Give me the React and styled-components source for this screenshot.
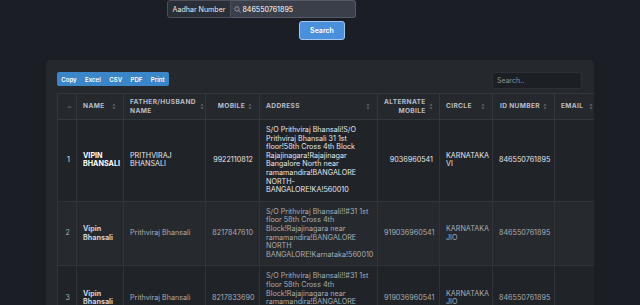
import React from 'react';
import styled, { createGlobalStyle } from 'styled-components';

const GlobalStyle = createGlobalStyle`
  html, body { margin: 0; padding: 0; background: #1b1e25; overflow: hidden; }
  body { font-family: Inter, "Noto Sans", sans-serif; }
  * { box-sizing: border-box; }
`;

const Page = styled.div`
  width: 640px;
  height: 305px;
  overflow: hidden;
  display: flex;
  flex-direction: column;
`;

const SearchForm = styled.form`
  display: flex;
  flex-direction: column;
  align-items: flex-start;
  margin: 0;
`;

const InputGroup = styled.div`
  display: flex;
  margin-left: 167px;
  width: 189px;
  height: 18px;
`;

const GroupLabel = styled.span`
  display: flex;
  align-items: center;
  padding: 0 4.5px;
  background: #2a2e36;
  border: 1px solid #4a4f59;
  border-radius: 3px 0 0 3px;
  color: #e8eaee;
  font-size: 7.1px;
  white-space: nowrap;
`;

const GroupField = styled.div`
  flex: 1;
  min-width: 0;
  display: flex;
  align-items: center;
  gap: 1.5px;
  padding: 0 3px;
  background: #3a3f49;
  border: 1px solid #555b66;
  border-left: none;
  border-radius: 0 3px 3px 0;
`;

const FieldInput = styled.input`
  flex: 1;
  width: 0;
  min-width: 0;
  border: none;
  outline: none;
  background: transparent;
  color: #ffffff;
  font-family: inherit;
  font-size: 7.1px;
  padding: 0;
`;

const SearchButton = styled.button`
  margin: 3px 0 0 299px;
  width: 46px;
  height: 19px;
  background: #4a8fdb;
  border: 1px solid #a3c6ef;
  border-radius: 3px;
  color: #ffffff;
  font-family: inherit;
  font-size: 7px;
  font-weight: 600;
  padding: 0;
`;

const Card = styled.section`
  flex: 1;
  margin: 20px 46px 0;
  background: #25282d;
  border-radius: 5px 5px 0 0;
  padding: 12px 0 0 11px;
  overflow: hidden;
`;

const Toolbar = styled.div`
  display: flex;
  justify-content: space-between;
  align-items: flex-start;
  padding-right: 12px;
  height: 17px;
`;

const ButtonGroup = styled.div`
  display: flex;
  height: 14px;
  background: #3b86c9;
  border-radius: 2px;
`;

const ExportButton = styled.button`
  background: transparent;
  border: none;
  padding: 0 4.2px;
  color: #ffffff;
  font-family: inherit;
  font-size: 6.1px;
  font-weight: 600;
`;

const FilterInput = styled.input`
  width: 90px;
  height: 17px;
  background: #1c1f24;
  border: 1px solid #2d3137;
  border-radius: 3px;
  color: #d0d3d8;
  font-family: inherit;
  font-size: 7px;
  padding: 0 4px;
  outline: none;
  &::placeholder { color: #8b9098; }
`;

const TableWrap = styled.div`
  margin-top: 4px;
  overflow: hidden;
`;

const Table = styled.table`
  border-collapse: collapse;
  table-layout: fixed;
  width: 543px;
`;

const Th = styled.th`
  height: 26px;
  padding: 0 7px 0 6px;
  background: #25282d;
  border: 1px solid #33373e;
  color: #b9bdc5;
  font-size: 6.6px;
  font-weight: 700;
  letter-spacing: 0.35px;
  text-transform: uppercase;
  line-height: 8.3px;
  vertical-align: middle;
`;

const HeadInner = styled.div`
  display: flex;
  align-items: center;
  gap: ${p => (p.$right ? '3px' : '4px')};
`;

const HeadText = styled.span`
  flex: 1;
  text-align: ${p => (p.$right ? 'right' : 'left')};
`;

const Tr = styled.tr`
  background: ${p => (p.$odd ? '#202328' : '#26292e')};
`;

const Td = styled.td`
  padding: 6px 6px;
  border: 1px solid #30343a;
  font-size: 7.2px;
  line-height: 8.6px;
  vertical-align: middle;
  text-align: ${p => (p.$right ? 'right' : 'left')};
  font-weight: ${p => (p.$bold ? 700 : 400)};
  color: ${p => p.$color};
  white-space: ${p => (p.$pre ? 'pre-line' : 'normal')};
`;

const SortIcon = () => (
  <svg width="4" height="7" viewBox="0 0 4 7" style={{ flex: 'none' }}>
    <path d="M2 0.5 L3.6 2.7 L0.4 2.7 Z" fill="#5d626b" />
    <path d="M2 6.5 L3.6 4.3 L0.4 4.3 Z" fill="#5d626b" />
  </svg>
);

const AscIcon = () => (
  <svg width="5" height="4" viewBox="0 0 5 4" style={{ flex: 'none' }}>
    <path d="M0.6 3.2 L2.5 1.2 L4.4 3.2" fill="none" stroke="#6f747d" strokeWidth="0.9" />
  </svg>
);

const MagnifierIcon = () => (
  <svg width="7" height="7" viewBox="0 0 10 10" style={{ flex: 'none' }}>
    <circle cx="4.2" cy="4.2" r="3.1" fill="none" stroke="#9aa0aa" strokeWidth="1.2" />
    <path d="M6.5 6.5 L9.2 9.2" stroke="#9aa0aa" strokeWidth="1.3" strokeLinecap="round" />
  </svg>
);

const columns = [
  { key: 'idx', label: '', width: 19, right: true },
  { key: 'name', label: 'Name', width: 47 },
  { key: 'father', label: 'Father/Husband Name', width: 82 },
  { key: 'mobile', label: 'Mobile', width: 54, right: true },
  { key: 'address', label: 'Address', width: 118 },
  { key: 'alt', label: 'Alternate Mobile', width: 62, right: true },
  { key: 'circle', label: 'Circle', width: 53 },
  { key: 'id', label: 'ID Number', width: 62, right: true },
  { key: 'email', label: 'Email', width: 46 },
];

const rows = [
  {
    idx: '1',
    name: 'VIPIN BHANSALI',
    father: 'PRITHVIRAJ BHANSALI',
    mobile: '9922110812',
    address:
      'S/O Prithviraj Bhansali!S/O\nPrithviraj Bhansali 31 1st\nfloor!58th Cross 4th Block\nRajajinagara!Rajajinagar\nBangalore North near\nramamandira!BANGALORE\nNORTH-\nBANGALORE!KA!560010',
    alt: '9036960541',
    circle: 'KARNATAKA VI',
    id: '846550761895',
    email: '',
    bright: true,
  },
  {
    idx: '2',
    name: 'Vipin Bhansali',
    father: 'Prithviraj Bhansali',
    mobile: '8217847610',
    address:
      'S/O Prithviraj Bhansali!!#31 1st\nfloor 58th Cross 4th\nBlock!Rajajinagara near\nramamandira!BANGALORE\nNORTH\nBANGALORE!Karnataka!560010',
    alt: '919036960541',
    circle: 'KARNATAKA JIO',
    id: '846550761895',
    email: '',
  },
  {
    idx: '3',
    name: 'Vipin Bhansali',
    father: 'Prithviraj Bhansali',
    mobile: '8217833690',
    address:
      'S/O Prithviraj Bhansali!!#31 1st\nfloor 58th Cross 4th\nBlock!Rajajinagara near\nramamandira!BANGALORE\nNORTH\nBANGALORE!Karnataka!560010',
    alt: '919036960541',
    circle: 'KARNATAKA JIO',
    id: '846550761895',
    email: '',
  },
];

function cellColor(row, key) {
  if (row.bright) return key === 'name' ? '#ffffff' : '#e4e6ea';
  if (key === 'name') return '#cfd2d7';
  return '#a9adb4';
}

export default function App() {
  return (
    <Page>
      <GlobalStyle />
      <SearchForm onSubmit={e => e.preventDefault()}>
        <InputGroup>
          <GroupLabel>Aadhar Number</GroupLabel>
          <GroupField>
            <MagnifierIcon />
            <FieldInput defaultValue="846550761895" />
          </GroupField>
        </InputGroup>
        <SearchButton type="submit">Search</SearchButton>
      </SearchForm>
      <Card>
        <Toolbar>
          <ButtonGroup>
            {['Copy', 'Excel', 'CSV', 'PDF', 'Print'].map(b => (
              <ExportButton key={b}>{b}</ExportButton>
            ))}
          </ButtonGroup>
          <FilterInput placeholder="Search.." />
        </Toolbar>
        <TableWrap>
          <Table>
            <colgroup>
              {columns.map(c => (
                <col key={c.key} style={{ width: c.width }} />
              ))}
            </colgroup>
            <thead>
              <tr>
                {columns.map(c => (
                  <Th key={c.key}>
                    <HeadInner $right={c.right}>
                      <HeadText $right={c.right}>{c.label}</HeadText>
                      {c.key === 'idx' ? <AscIcon /> : <SortIcon />}
                    </HeadInner>
                  </Th>
                ))}
              </tr>
            </thead>
            <tbody>
              {rows.map((r, i) => (
                <Tr key={r.idx} $odd={i % 2 === 0}>
                  {columns.map(c => (
                    <Td
                      key={c.key}
                      $right={c.right}
                      $bold={c.key === 'name'}
                      $pre={c.key === 'address'}
                      $color={cellColor(r, c.key)}
                    >
                      {r[c.key]}
                    </Td>
                  ))}
                </Tr>
              ))}
            </tbody>
          </Table>
        </TableWrap>
      </Card>
    </Page>
  );
}
